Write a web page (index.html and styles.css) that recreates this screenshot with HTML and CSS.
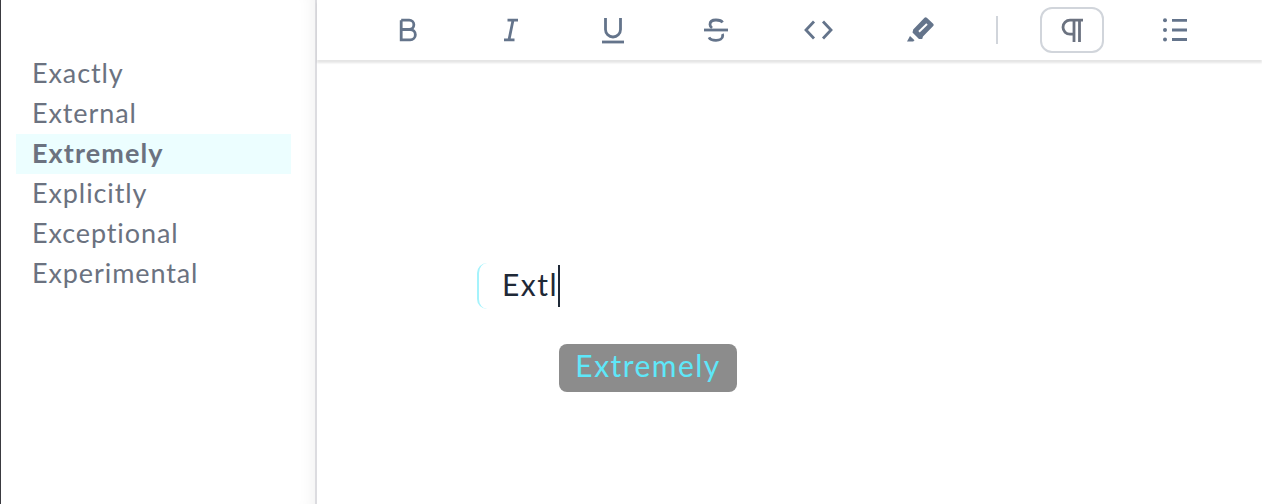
FILE: index.html
```html
<!DOCTYPE html>
<html lang="en">
<head>
  <meta charset="UTF-8" />
  <title>Editor</title>
  <link rel="stylesheet" href="styles.css">
</head>
<body>
  <div class="app">
    <aside class="sidebar">
      <ul class="word-list">
        <li>Exactly</li>
        <li>External</li>
        <li class="active">Extremely</li>
        <li>Explicitly</li>
        <li>Exceptional</li>
        <li>Experimental</li>
      </ul>
    </aside>
    <main class="main">
      <div class="toolbar">
        <button class="tool">
          <svg viewBox="0 0 32 32"><path d="M10.200 6.200v19.600h9a5 5 0 0 0 0-10.300h-9m0 0h8a4.600 4.600 0 0 0 0-9.300h-8"/></svg>
        </button>
        <button class="tool">
          <svg viewBox="0 0 32 32"><path d="M13.500 6.200H24M10 25.800h10.500M19 6.200l-4 19.600"/></svg>
        </button>
        <button class="tool">
          <svg viewBox="0 0 32 32"><path d="M9.500 4v11.500a7.500 7.500 0 0 0 15 0V4"/><path d="M6 28h22"/></svg>
        </button>
        <button class="tool">
          <svg viewBox="0 0 32 32"><path d="M5 16h24"/><path d="M23.500 8.500C22.500 6.500 20 6 17 6c-3.500 0-6 1.500-6 4.500 0 1.500.7 2.500 2 3.500"/><path d="M23.300 20c.3.600.4 1.200.4 1.700 0 3-3 4.600-6.700 4.600-3.500 0-6-1-7-3"/></svg>
        </button>
        <button class="tool">
          <svg viewBox="0 0 32 32"><path d="M12 7.500 4 16l8 8.500M21 7.500l8 8.500-8 8.500"/></svg>
        </button>
        <button class="tool">
          <svg viewBox="0 0 32 32"><path class="solid" d="M20.500 3.800a1.600 1.600 0 0 1 2.300 0l6.400 6a1.600 1.600 0 0 1 0 2.300L19 22.500l-.8 2.500h-3.200L8.500 18.500l.7-3z"/><path class="solid" d="M6 22l4.500 4.300-1.300 1.200H3z"/><path class="slot" d="M15 17.700 23 10"/></svg>
        </button>
        <span class="divider"></span>
        <button class="tool selected">
          <svg viewBox="0 0 32 32"><path d="M27 6.200H14a7 7 0 0 0 0 14h3.500M18 6.200V28M23.500 6.200V28"/></svg>
        </button>
        <button class="tool">
          <svg viewBox="0 0 32 32"><path d="M13 6.300h15M13 16h15M13 25.500h15"/><circle cx="6" cy="6.300" r="2"/><circle cx="6" cy="16" r="2"/><circle cx="6" cy="25.500" r="2"/></svg>
        </button>
      </div>
      <div class="editor">
        <div class="line">
          <span class="typed">Extl</span><span class="caret"></span>
          <div class="suggest">Extremely</div>
        </div>
      </div>
    </main>
  </div>
</body>
</html>
```

FILE: styles.css
```css
* {
  box-sizing: border-box;
}

html, body {
  height: 100%;
}

body {
  margin: 0;
  font-family: 'Lato', 'Open Sans', sans-serif;
  background-color: #ffffff;
  overflow: hidden;
}

.app {
  display: flex;
  height: 504px;
  border-left: 1px solid #3a3a40;
}

.sidebar {
  width: 316px;
  padding: 54px 24px 0 15px;
  border-right: 2px solid #dcdce0;
  box-shadow: inset -18px 0 18px -18px rgba(0, 0, 0, 0.08);
}

.word-list {
  list-style: none;
  margin: 0;
  padding: 0;
}

.word-list li {
  height: 40px;
  line-height: 38px;
  padding-left: 16px;
  font-size: 27px;
  letter-spacing: 0.9px;
  color: #6b7280;
}

.word-list li.active {
  background: #ecfeff;
  font-weight: bold;
  letter-spacing: 1.1px;
}

.main {
  flex: 1;
  min-width: 0;
}

.toolbar {
  display: flex;
  align-items: center;
  height: 60px;
  padding-left: 58px;
  gap: 38.7px;
  box-shadow: 0 3px 2px rgba(0, 0, 0, 0.1);
}

.tool {
  display: flex;
  align-items: center;
  justify-content: center;
  width: 64px;
  height: 46px;
  padding: 0;
  background: none;
  border: 2px solid transparent;
  border-radius: 12px;
}

.tool.selected {
  border-color: #d1d5db;
}

.tool svg {
  width: 32px;
  height: 32px;
  flex: none;
}

.tool svg path {
  fill: none;
  stroke: #64748b;
  stroke-width: 2.8;
}

.tool.selected svg path {
  stroke: #6b7280;
}

.tool svg circle {
  fill: #64748b;
}

.tool svg path.solid {
  fill: #64748b;
  stroke: none;
}

.tool svg path.slot {
  stroke: #ffffff;
  stroke-width: 2;
}

.divider {
  width: 2px;
  height: 28px;
  margin: 0 3px 0 5px;
  background: #d1d5db;
}

.editor {
  padding: 203px 0 0 160px;
}

.line {
  position: relative;
  display: flex;
  align-items: center;
  height: 46px;
  padding-left: 23px;
  border-left: 2px solid #a5f3fc;
  border-radius: 10px 0 0 10px;
  font-size: 30px;
  letter-spacing: 1.5px;
  color: #1f2937;
}

.typed {
  margin-top: -4px;
}

.caret {
  width: 2px;
  height: 42px;
  background: #1f2937;
}

.suggest {
  position: absolute;
  left: 80px;
  top: 81px;
  width: 178px;
  height: 48px;
  line-height: 42px;
  text-align: center;
  background: #8c8c8c;
  border-radius: 8px;
  font-size: 30px;
  letter-spacing: 1.45px;
  color: #5ee7f9;
}
```
